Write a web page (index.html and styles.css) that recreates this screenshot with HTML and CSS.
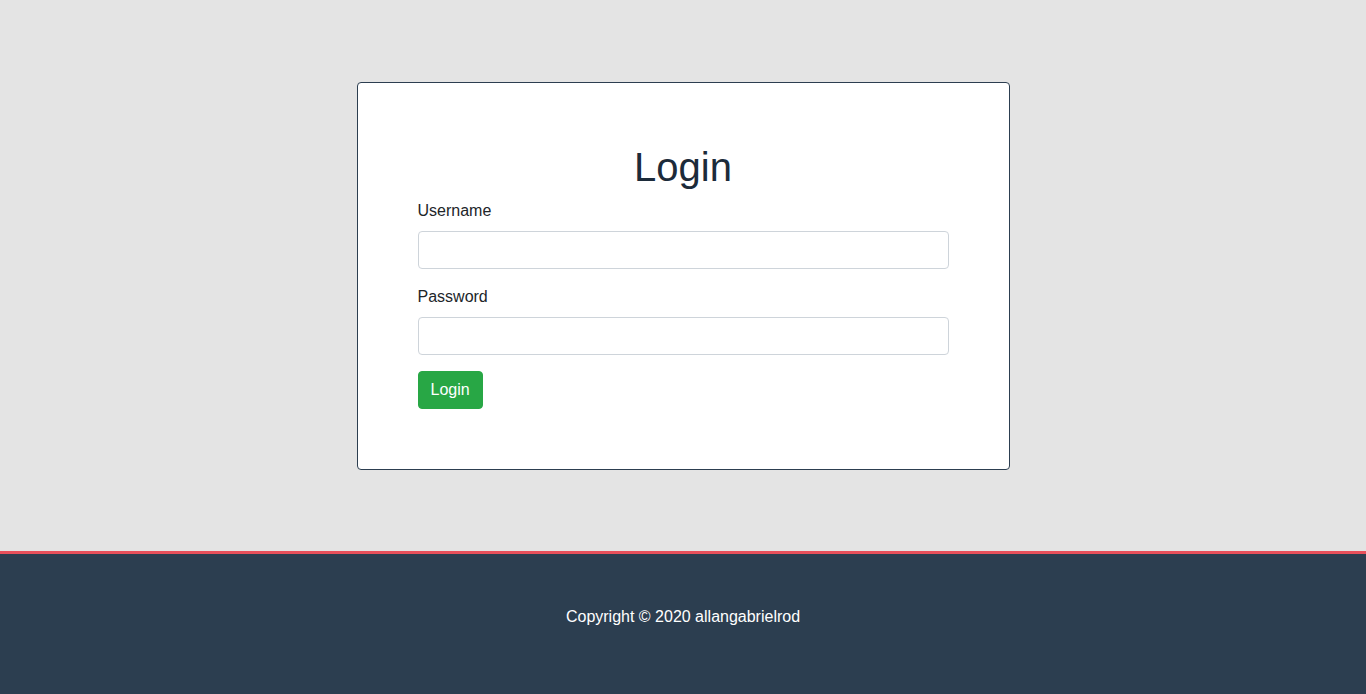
FILE: index.html
```html
<!DOCTYPE html>
<html lang="en">
<head>
<meta charset="utf-8">
<title>Login</title>
<link rel="stylesheet" href="styles.css">
</head>
<body>
<main class="main">
  <div class="card">
    <h1 class="title">Login</h1>
    <form class="form">
      <div class="group">
        <label class="label" for="username">Username</label>
        <input class="input" id="username" type="text">
      </div>
      <div class="group">
        <label class="label" for="password">Password</label>
        <input class="input" id="password" type="password">
      </div>
      <button class="btn" type="button">Login</button>
    </form>
  </div>
</main>
<footer class="footer">
  <p class="copy">Copyright © 2020 allangabrielrod</p>
</footer>
</body>
</html>
```

FILE: styles.css
```css
* { box-sizing: border-box; }
html, body { margin: 0; padding: 0; }
body {
  font-family: "Liberation Sans", Arial, sans-serif;
  font-size: 16px;
  line-height: 1.5;
  color: #212529;
  background: #e4e4e4;
  height: 694px;
  display: flex;
  flex-direction: column;
}
.main {
  height: 550px;
  flex-shrink: 0;
  display: flex;
  justify-content: center;
  padding-top: 82px;
}
.card {
  width: 653px;
  height: 388px;
  background: #fff;
  border: 1px solid #2c3e50;
  border-radius: 4px;
  padding: 60px 60px;
}
.title {
  margin: 0 0 8px;
  font-size: 40px;
  font-weight: 500;
  line-height: 1.2;
  text-align: center;
  color: #1c2b3a;
}
.group { margin-bottom: 16px; }
.label {
  display: block;
  margin-bottom: 8px;
}
.input {
  display: block;
  width: 100%;
  height: 38px;
  padding: 6px 12px;
  font: inherit;
  border: 1px solid #ced4da;
  border-radius: 4px;
  background: #fff;
}
.btn {
  font: inherit;
  color: #fff;
  background: #28a745;
  border: 1px solid #28a745;
  border-radius: 4px;
  padding: 6px 12px;
  height: 38px;
  cursor: pointer;
}
.footer {
  flex: 1;
  background: #2c3e50;
  border-top: 3px solid #e8505b;
  margin-top: 1px;
  text-align: center;
  color: #fff;
  padding-top: 51px;
}
.copy { margin: 0; }
```
